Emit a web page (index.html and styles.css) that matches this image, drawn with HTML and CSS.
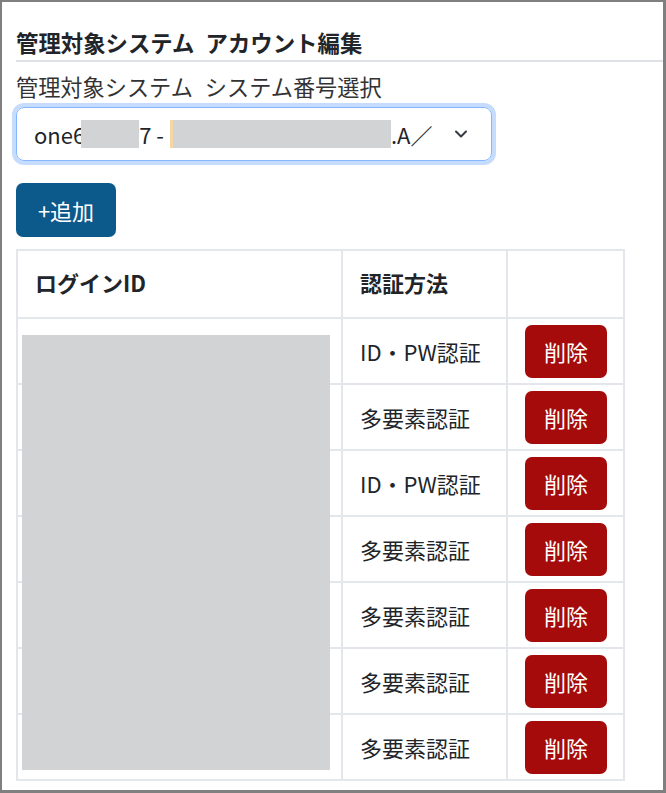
FILE: index.html
```html
<!DOCTYPE html>
<html lang="ja">
<head>
    <meta charset="UTF-8">
    <meta name="viewport" content="width=device-width, initial-scale=1.0">
    <title>アカウント編集</title>
    <link rel="stylesheet" href="styles.css">
</head>
<body>
    <div class="frame">
        <h2 class="page-title">管理対象システム アカウント編集</h2>

        <div class="form-block">
            <label class="form-label">管理対象システム システム番号選択</label>
            <div class="form-select">
                <span class="select-text">one6<span class="redact redact-a"></span>7 - <span class="redact-mark"></span><span class="redact redact-b"></span>.A／</span>
                <svg class="chevron" width="16" height="16" viewBox="0 0 16 16">
                    <path d="M3 5.5l5 5 5-5" fill="none" stroke="#343a40" stroke-width="2" stroke-linecap="round" stroke-linejoin="round"/>
                </svg>
            </div>
        </div>

        <button class="btn btn-add">+追加</button>

        <div class="table-wrap">
            <table class="account-table">
                <colgroup>
                    <col class="col-id">
                    <col class="col-auth">
                    <col class="col-action">
                </colgroup>
                <thead>
                    <tr>
                        <th>ログインID</th>
                        <th>認証方法</th>
                        <th></th>
                    </tr>
                </thead>
                <tbody>
                    <tr><td></td><td>ID・PW認証</td><td><button class="btn btn-delete">削除</button></td></tr>
                    <tr><td></td><td>多要素認証</td><td><button class="btn btn-delete">削除</button></td></tr>
                    <tr><td></td><td>ID・PW認証</td><td><button class="btn btn-delete">削除</button></td></tr>
                    <tr><td></td><td>多要素認証</td><td><button class="btn btn-delete">削除</button></td></tr>
                    <tr><td></td><td>多要素認証</td><td><button class="btn btn-delete">削除</button></td></tr>
                    <tr><td></td><td>多要素認証</td><td><button class="btn btn-delete">削除</button></td></tr>
                    <tr><td></td><td>多要素認証</td><td><button class="btn btn-delete">削除</button></td></tr>
                </tbody>
            </table>
            <!-- masked login ids -->
            <div class="redact-cover"></div>
        </div>
    </div>
</body>
</html>
```

FILE: styles.css
```css
* {
    box-sizing: border-box;
    margin: 0;
    padding: 0;
}
body {
    font-family: "Noto Sans CJK JP", "Noto Sans", sans-serif;
    color: #212529;
    background: #fff;
}
.frame {
    width: 666px;
    height: 793px;
    border-style: solid;
    border-color: #7f7f7f;
    border-width: 2px 3px 3px 2px;
    padding-left: 14px;
    padding-top: 25px;
    overflow: hidden;
}
.page-title {
    font-size: 22.4px;
    font-weight: 700;
    line-height: 30px;
    word-spacing: 6px;
    padding-bottom: 3px;
    border-bottom: 2px solid #dee2e6;
}
.form-block {
    margin-top: 8px;
    width: 476px;
}
.form-label {
    display: block;
    font-size: 22.2px;
    line-height: 33px;
    word-spacing: 7px;
    margin-bottom: 4px;
    color: #333;
}
.form-select {
    display: flex;
    align-items: center;
    justify-content: space-between;
    height: 54px;
    padding: 0 22px 0 17px;
    border: 1px solid #86b7fe;
    border-radius: 8px;
    box-shadow: 0 0 0 4px #c5dcfe;
    font-size: 22px;
}
.select-text {
    white-space: nowrap;
    display: flex;
    align-items: center;
}
.redact {
    display: inline-block;
    background: #d1d3d5;
    height: 28px;
}
.redact-a { width: 58px; margin-left: -4px; }
.redact-b { width: 218px; }
.redact-mark {
    display: inline-block;
    width: 3px;
    height: 28px;
    margin-left: 6px;
    background: #f6d7a3;
}
.chevron {
    flex-shrink: 0;
}
.btn {
    font-family: inherit;
    font-size: 22px;
    line-height: 32px;
    color: #fff;
    border: none;
    border-radius: 7px;
    cursor: pointer;
}
.btn-add {
    display: block;
    margin-top: 22px;
    width: 100px;
    height: 54px;
    background: #0c5a8b;
}
.btn-delete {
    width: 82px;
    height: 53px;
    background: #a50b0b;
}
.table-wrap {
    position: relative;
    margin-top: 12px;
    width: 607px;
}
.account-table {
    width: 607px;
    table-layout: fixed;
    border-collapse: collapse;
}
.col-id { width: 325px; }
.col-auth { width: 165px; }
.col-action { width: 117px; }
.account-table th,
.account-table td {
    border: 2px solid #e3e6ea;
    text-align: left;
    vertical-align: middle;
    font-size: 22px;
    line-height: 32px;
    padding: 0 17px;
}
.account-table th {
    height: 68px;
    font-weight: 700;
    padding-bottom: 5px;
}
.account-table td {
    height: 66px;
}
.redact-cover {
    position: absolute;
    left: 6px;
    top: 86px;
    width: 308px;
    height: 435px;
    background: #d1d3d5;
}
```
